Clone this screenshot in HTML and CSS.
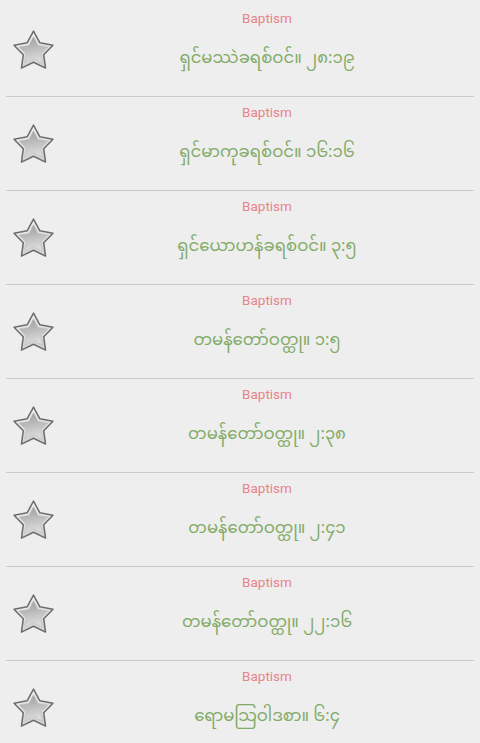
FILE: index.html
```html
<!DOCTYPE html>
<html>
<head>
<meta charset="utf-8">
<link rel="stylesheet" href="styles.css">
</head>
<body>
<svg width="0" height="0" class="defs">
  <defs>
    <linearGradient id="rim" x1="0" y1="0" x2="0.3" y2="1">
      <stop offset="0" stop-color="#f6f6f6"/>
      <stop offset="1" stop-color="#d2d2d2"/>
    </linearGradient>
    <linearGradient id="core" x1="0" y1="0" x2="0.2" y2="1">
      <stop offset="0" stop-color="#9a9a9a"/>
      <stop offset="1" stop-color="#dcdcdc"/>
    </linearGradient>
    <symbol id="star" viewBox="0 0 44 44">
      <polygon points="22,3 28.2,14.5 41.02,16.82 32,26.2 33.76,39.18 22,33.5 10.24,39.18 12,26.2 2.98,16.82 15.8,14.5" fill="url(#rim)" stroke="#6e6e6e" stroke-width="1.5" stroke-linejoin="round"/>
      <polygon points="22,8.5 26.5,17 36,18.6 29.3,25.3 30.6,34.3 22,30.2 13.4,34.3 14.7,25.3 8,18.6 17.5,17" fill="url(#core)" stroke="#bdbdbd" stroke-width="0.6" stroke-linejoin="round"/>
    </symbol>
  </defs>
</svg>
<ul class="list">
  <li class="row">
    <div class="icon"><svg class="star" width="45" height="45"><use href="#star"/></svg></div>
    <div class="texts"><span class="tag">Baptism</span><span class="verse">ရှင်မဿဲခရစ်ဝင်။ ၂၈:၁၉</span></div>
  </li>
  <li class="row">
    <div class="icon"><svg class="star" width="45" height="45"><use href="#star"/></svg></div>
    <div class="texts"><span class="tag">Baptism</span><span class="verse">ရှင်မာကုခရစ်ဝင်။ ၁၆:၁၆</span></div>
  </li>
  <li class="row">
    <div class="icon"><svg class="star" width="45" height="45"><use href="#star"/></svg></div>
    <div class="texts"><span class="tag">Baptism</span><span class="verse">ရှင်ယောဟန်ခရစ်ဝင်။ ၃:၅</span></div>
  </li>
  <li class="row">
    <div class="icon"><svg class="star" width="45" height="45"><use href="#star"/></svg></div>
    <div class="texts"><span class="tag">Baptism</span><span class="verse">တမန်တော်ဝတ္ထု။ ၁:၅</span></div>
  </li>
  <li class="row">
    <div class="icon"><svg class="star" width="45" height="45"><use href="#star"/></svg></div>
    <div class="texts"><span class="tag">Baptism</span><span class="verse">တမန်တော်ဝတ္ထု။ ၂:၃၈</span></div>
  </li>
  <li class="row">
    <div class="icon"><svg class="star" width="45" height="45"><use href="#star"/></svg></div>
    <div class="texts"><span class="tag">Baptism</span><span class="verse">တမန်တော်ဝတ္ထု။ ၂:၄၁</span></div>
  </li>
  <li class="row">
    <div class="icon"><svg class="star" width="45" height="45"><use href="#star"/></svg></div>
    <div class="texts"><span class="tag">Baptism</span><span class="verse">တမန်တော်ဝတ္ထု။ ၂၂:၁၆</span></div>
  </li>
  <li class="row">
    <div class="icon"><svg class="star" width="45" height="45"><use href="#star"/></svg></div>
    <div class="texts"><span class="tag">Baptism</span><span class="verse">ရောမသြဝါဒစာ။ ၆:၄</span></div>
  </li>
</ul>
</body>
</html>
```
FILE: styles.css
```css
html, body {
  margin: 0;
  padding: 0;
  background: #eeeeee;
  overflow: hidden;
}
.defs {
  position: absolute;
  width: 0;
  height: 0;
}
.list {
  list-style: none;
  margin: 0;
  padding: 3px 0 0 0;
}
.row {
  height: 93px;
  margin: 0 6px 0 6px;
  border-bottom: 1px solid #cbcbcb;
  display: flex;
  align-items: stretch;
}
.icon {
  width: 54px;
  display: flex;
  align-items: center;
  justify-content: center;
  padding-top: 2px;
}
.star {
  display: block;
}
.texts {
  flex: 1;
  display: flex;
  flex-direction: column;
  align-items: center;
  padding-right: 0;
  padding-top: 7px;
}
.tag {
  font-family: Roboto, "Noto Sans", sans-serif;
  font-size: 13.5px;
  line-height: 16px;
  color: #e8838b;
}
.verse {
  margin-top: 18px;
  font-family: "Noto Sans Myanmar", Padauk, "Myanmar Text", "Noto Sans", sans-serif;
  font-size: 16.5px;
  line-height: 30px;
  color: #82ab68;
}
```
